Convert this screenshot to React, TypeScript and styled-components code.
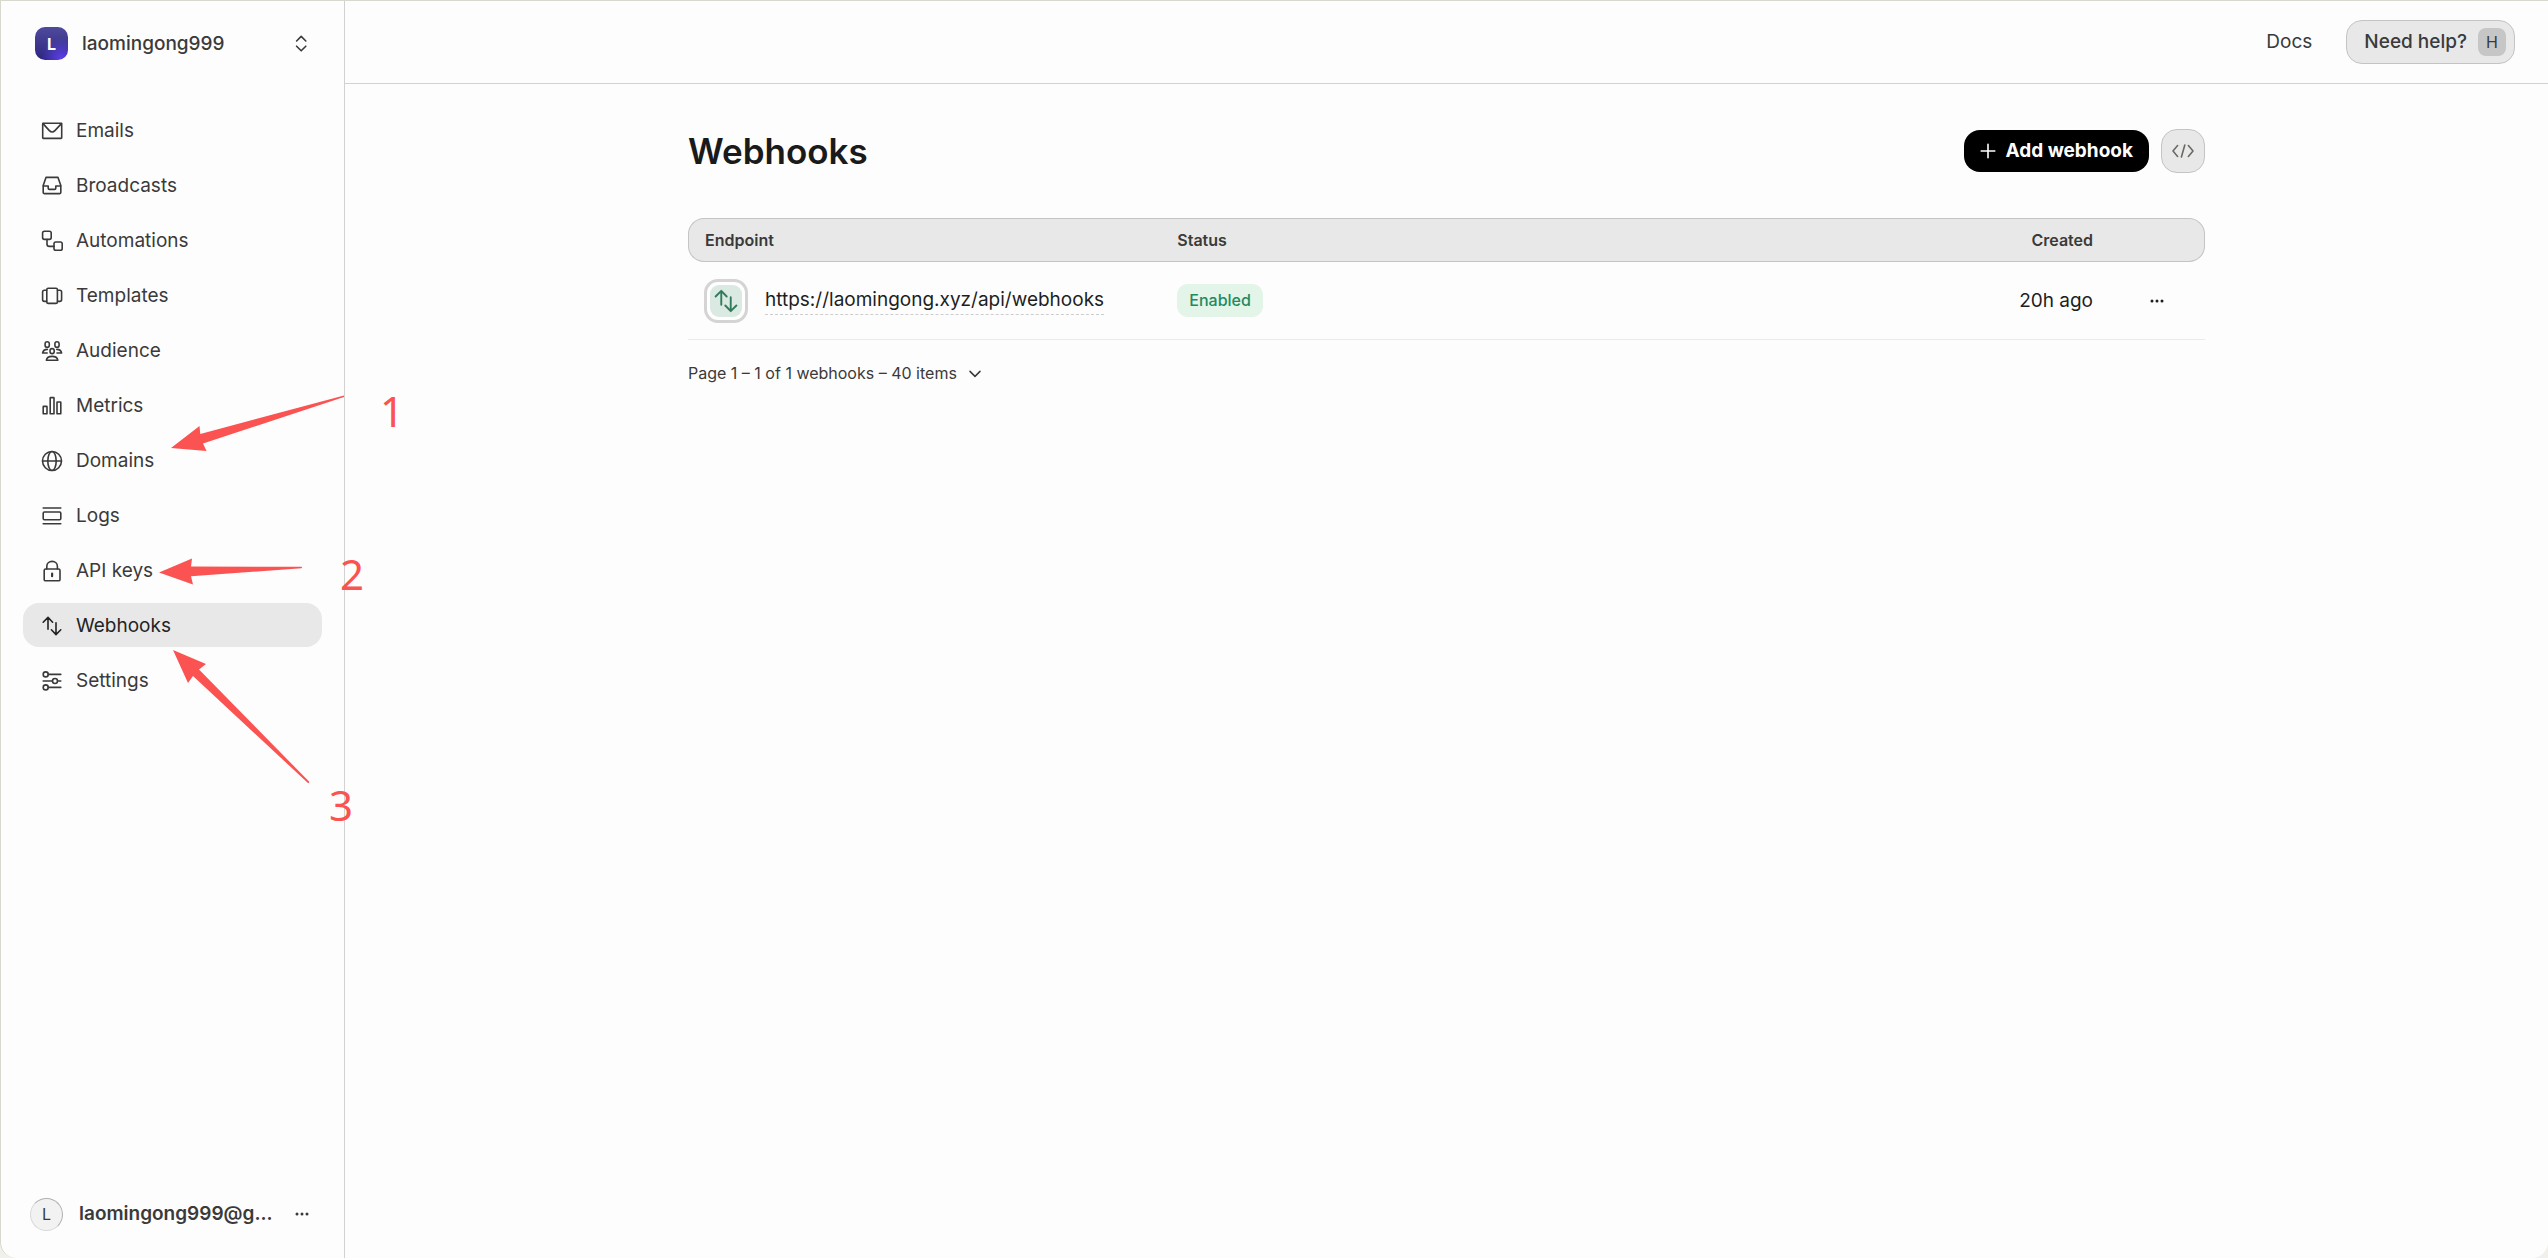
import React from "react";
import styled, { createGlobalStyle } from "styled-components";

const GlobalStyle = createGlobalStyle`
  *, *::before, *::after { box-sizing: border-box; }
  body {
    margin: 0;
    background: #f1f0ea;
    font-family: Inter, "Liberation Sans", sans-serif;
    color: #3a3a3a;
  }
  button, a { font: inherit; color: inherit; }
  button { border: 0; background: none; padding: 0; cursor: pointer; }
  a { text-decoration: none; }
  svg { display: block; flex: none; }
`;

const Frame = styled.div`
  position: relative;
  display: flex;
  min-height: 100vh;
  border: 1px solid #d8d8ce;
  border-bottom: 0;
  border-right: 0;
  border-radius: 0 0 16px 16px;
  background: #fdfdfd;
`;

const Sidebar = styled.aside`
  display: flex;
  flex-direction: column;
  flex: none;
  width: 344px;
  border-right: 1px solid #d2d2d2;
`;

const TeamSwitcher = styled.button`
  display: flex;
  align-items: center;
  gap: 14px;
  height: 85px;
  padding: 0 32px 0 34px;
  font-size: 19px;
  font-weight: 500;
  line-height: 28px;
`;

const TeamAvatar = styled.span`
  display: grid;
  place-items: center;
  width: 33px;
  height: 33px;
  border-radius: 10px;
  background:
    radial-gradient(circle at 80% 95%, #5b3fe6 0, rgba(91, 63, 230, 0) 50%),
    linear-gradient(#4f4a9c, #2c2680);
  color: #fff;
  font-size: 16px;
  font-weight: 700;
`;

const Grow = styled.span`
  flex: 1;
  min-width: 0;
  overflow: hidden;
  text-align: left;
  text-overflow: ellipsis;
  white-space: nowrap;
`;

const Nav = styled.nav`
  display: flex;
  flex-direction: column;
  flex: 1;
  gap: 11px;
  padding: 22px;
`;

const NavLink = styled.a<{ $active?: boolean }>`
  display: flex;
  align-items: center;
  gap: 13px;
  height: 44px;
  padding: 2px 18px 0;
  border-radius: 16px;
  background: ${(p) => (p.$active ? "#e8e8e8" : "transparent")};
  color: ${(p) => (p.$active ? "#242424" : "#3a3a3a")};
  font-size: 19px;
  line-height: 28px;
`;

const UserRow = styled.div`
  display: flex;
  align-items: center;
  gap: 16px;
  height: 88px;
  padding: 0 35px 0 29px;
  font-size: 19px;
  font-weight: 600;
  line-height: 28px;
`;

const UserAvatar = styled.span`
  display: grid;
  place-items: center;
  width: 33px;
  height: 33px;
  border: 1px solid #d9d9d9;
  border-top-color: #b0b0b0;
  border-right-color: #b0b0b0;
  border-radius: 50%;
  background: #f2f2f2;
  font-size: 16px;
  font-weight: 400;
`;

const Main = styled.div`
  flex: 1;
  min-width: 0;
`;

const TopBar = styled.header`
  display: flex;
  align-items: center;
  justify-content: flex-end;
  gap: 34px;
  height: 83px;
  padding: 0 33px;
  border-bottom: 1px solid #d2d2d2;
  font-size: 19px;
  line-height: 28px;
`;

const HelpButton = styled.button`
  display: flex;
  align-items: center;
  gap: 11px;
  height: 44px;
  padding: 0 8px 0 17px;
  border: 1px solid #c4c4c4;
  border-radius: 16px;
  background: #e8e8e8;
  font-weight: 500;
`;

const Key = styled.kbd`
  display: grid;
  place-items: center;
  width: 28px;
  height: 28px;
  border-radius: 8px;
  background: #c6c6c6;
  font-family: inherit;
  font-size: 16px;
  font-weight: 400;
`;

const Content = styled.main`
  max-width: 1517px;
  margin: 0 auto;
  padding-top: 45px;
`;

const TitleRow = styled.div`
  display: flex;
  align-items: center;
  gap: 12px;
  height: 44px;
`;

const Title = styled.h1`
  flex: 1;
  margin: 0;
  color: #1a1a1a;
  font-size: 35px;
  font-weight: 600;
  line-height: 44px;
`;

const AddButton = styled.button`
  display: flex;
  align-items: center;
  gap: 9px;
  height: 42px;
  padding: 0 16px;
  border-radius: 16px;
  background: #000;
  color: #fff;
  font-size: 19px;
  font-weight: 700;
  line-height: 28px;
`;

const CodeButton = styled.button`
  display: grid;
  place-items: center;
  width: 44px;
  height: 44px;
  border: 1px solid #c4c4c4;
  border-radius: 16px;
  background: #e8e8e8;
  color: #6a6a64;
`;

const Table = styled.table`
  width: 100%;
  margin-top: 45px;
  border-collapse: separate;
  border-spacing: 0;
  table-layout: fixed;
`;

const HeadCell = styled.th<{ $width?: string; $end?: boolean }>`
  width: ${(p) => p.$width ?? "auto"};
  height: 44px;
  padding: 0 16px;
  border: solid #c4c4c4;
  border-width: 1px 0;
  background: #e8e8e8;
  font-size: 16px;
  font-weight: 600;
  line-height: 22px;
  text-align: ${(p) => (p.$end ? "right" : "left")};

  &:first-child {
    border-left-width: 1px;
    border-radius: 16px 0 0 16px;
  }
  &:last-child {
    border-right-width: 1px;
    border-radius: 0 16px 16px 0;
  }
`;

const Cell = styled.td<{ $align?: "right" | "center" }>`
  height: 78px;
  padding: 0 16px;
  border-bottom: 1px solid #ebebeb;
  color: #1e1e1e;
  font-size: 19px;
  line-height: 28px;
  text-align: ${(p) => p.$align ?? "left"};
`;

const Endpoint = styled.div`
  display: flex;
  align-items: center;
  gap: 17px;
`;

const Tile = styled.span`
  display: grid;
  place-items: center;
  flex: none;
  width: 44px;
  height: 44px;
  border: 3px solid #d4d4d4;
  border-radius: 14px;
  background: #fff;
`;

const TileFace = styled.span`
  display: grid;
  place-items: center;
  width: 32px;
  height: 32px;
  border-radius: 9px;
  background: #daeae2;
  color: #327a5a;
`;

const EndpointLink = styled.a`
  border-bottom: 1px dashed #cdcdcd;
`;

const Badge = styled.span`
  display: inline-block;
  padding: 0 12px;
  border-radius: 11px;
  background: #e3f4e9;
  color: #218a5f;
  font-size: 16px;
  font-weight: 500;
  line-height: 33px;
  vertical-align: middle;
`;

const MoreButton = styled.button`
  display: inline-grid;
  place-items: center;
  height: 28px;
  vertical-align: middle;
`;

const Pager = styled.button`
  display: flex;
  align-items: center;
  gap: 10px;
  margin-top: 22px;
  font-size: 16px;
  line-height: 22px;
`;

const Annotations = styled.svg`
  position: absolute;
  top: -1px;
  left: -1px;
  pointer-events: none;
  fill: #fb5252;
`;

const Mark = styled.span<{ $x: number; $y: number }>`
  position: absolute;
  left: ${(p) => p.$x}px;
  top: ${(p) => p.$y}px;
  color: #fb5252;
  font-family: "Noto Sans", "Open Sans", sans-serif;
  font-size: 42px;
  line-height: 48px;
`;

const Icon = ({ children, size = 22 }: { children: React.ReactNode; size?: number }) => (
  <svg
    width={size}
    height={size}
    viewBox="0 0 22 22"
    fill="none"
    stroke="currentColor"
    strokeWidth="1.6"
    strokeLinecap="round"
    strokeLinejoin="round"
    aria-hidden="true"
  >
    {children}
  </svg>
);

const Arrows = () => (
  <>
    <path d="M2.2 7.2 7 2.4l4.6 4.800M7 2.6v11.6" />
    <path d="M10.4 14.8 15 19.6l4.8-4.8M15 19.4V7.8" />
  </>
);

const Dots = () => (
  <svg width="14" height="4" viewBox="0 0 14 4" fill="currentColor" aria-hidden="true">
    <circle cx="2" cy="2" r="1.5" />
    <circle cx="7" cy="2" r="1.5" />
    <circle cx="12" cy="2" r="1.5" />
  </svg>
);

const navItems: { label: string; icon: React.ReactNode; active?: boolean }[] = [
  {
    label: "Emails",
    icon: (
      <>
        <rect x="1.7" y="3.2" width="19" height="15.2" rx="0.6" />
        <path d="m2 3.6 6.4 7c1.7 1.8 3.8 1.8 5.5 0l6.5-7" />
      </>
    ),
  },
  {
    label: "Broadcasts",
    icon: (
      <>
        <path d="M2.2 10.6 5 2.400h12l2.8 8.200v7q0 1-1 1H3.200q-1 0-1-1z" />
        <path d="M2.4 11h4.8v2.2q0 1.200 1.200 1.200h5.200q1.200 0 1.200-1.200V11h4.800" />
      </>
    ),
  },
  {
    label: "Automations",
    icon: (
      <>
        <rect x="1.6" y="1.2" width="8.6" height="8.2" rx="1.8" />
        <rect x="13" y="12" width="8.2" height="8.2" rx="1.8" />
        <path d="M6 9.600V14q0 2.400 2.400 2.400H13" />
      </>
    ),
  },
  {
    label: "Templates",
    icon: (
      <>
        <rect x="5.8" y="3.2" width="10.6" height="15.2" rx="1.4" />
        <path d="M5.600 5.200H3.400q-1.800 0-1.800 1.800v7.600q0 1.800 1.800 1.800h2.200M16.600 5.200h2.200q1.800 0 1.800 1.800v7.600q0 1.800-1.800 1.800h-2.200" />
      </>
    ),
  },
  {
    label: "Audience",
    icon: (
      <>
        <rect x="4.1" y="1.7" width="4.2" height="5.6" rx="2.1" />
        <rect x="13.900" y="1.7" width="4.2" height="5.6" rx="2.1" />
        <rect x="9" y="8.6" width="4.2" height="5" rx="2.1" />
        <path d="M6.400 9.400c-2.600 0-4.400 1.400-4.800 3.600h4.600M15.800 9.400c2.600 0 4.400 1.400 4.800 3.600H16" />
        <path d="M5.400 20.200c.4-2.400 2.600-3.800 5.700-3.800s5.300 1.400 5.700 3.800z" />
      </>
    ),
  },
  {
    label: "Metrics",
    icon: (
      <>
        <rect x="2.2" y="11.4" width="3.8" height="7.4" rx="0.4" />
        <rect x="9.2" y="2.6" width="3.8" height="16.2" rx="0.4" />
        <rect x="16" y="7" width="3.8" height="11.8" rx="0.4" />
      </>
    ),
  },
  {
    label: "Domains",
    icon: (
      <>
        <circle cx="11" cy="11" r="9.5" />
        <ellipse cx="11" cy="11" rx="4.2" ry="9.5" />
        <path d="M1.600 11h18.800" />
      </>
    ),
  },
  {
    label: "Logs",
    icon: (
      <>
        <path d="M2.200 3h17.600M2.200 18.800h17.600" />
        <rect x="2.2" y="7" width="17.6" height="7.8" rx="1.2" />
      </>
    ),
  },
  {
    label: "API keys",
    icon: (
      <>
        <rect x="3.2" y="9" width="15.8" height="11.8" rx="1.4" />
        <path d="M5.800 9V6.400C5.800 3.400 8 1.400 11.100 1.400s5.300 2 5.300 5V9" />
        <path d="M11.100 13.600v2.600" strokeWidth="2.2" />
      </>
    ),
  },
  { label: "Webhooks", active: true, icon: <Arrows /> },
  {
    label: "Settings",
    icon: (
      <>
        <circle cx="4.7" cy="4.4" r="2.5" />
        <circle cx="14" cy="11" r="2.5" />
        <circle cx="4.7" cy="17.4" r="2.5" />
        <path d="M7.400 4.400h12.400M2.200 11h9.200M16.700 11h3.100M7.400 17.400h12.400" />
      </>
    ),
  },
];

export default function App() {
  return (
    <>
      <GlobalStyle />
      <Frame>
        <Sidebar>
          <TeamSwitcher>
            <TeamAvatar>L</TeamAvatar>
            <Grow>laomingong999</Grow>
            <Icon>
              <path d="m6.600 8 4.600-4.600L15.800 8M6.600 13.200l4.600 4.600 4.600-4.600" />
            </Icon>
          </TeamSwitcher>
          <Nav aria-label="Main">
            {navItems.map((item) => (
              <NavLink
                key={item.label}
                href="#"
                $active={item.active}
                aria-current={item.active ? "page" : undefined}
              >
                <Icon>{item.icon}</Icon>
                {item.label}
              </NavLink>
            ))}
          </Nav>
          <UserRow>
            <UserAvatar>L</UserAvatar>
            <Grow>laomingong999@g...</Grow>
            <MoreButton aria-label="Account menu">
              <Dots />
            </MoreButton>
          </UserRow>
        </Sidebar>

        <Main>
          <TopBar>
            <a href="#">Docs</a>
            <HelpButton>
              Need help? <Key>H</Key>
            </HelpButton>
          </TopBar>
          <Content>
            <TitleRow>
              <Title>Webhooks</Title>
              <AddButton>
                <svg width="16" height="16" viewBox="0 0 16 16" stroke="currentColor" strokeWidth="1.6" strokeLinecap="round" aria-hidden="true">
                  <path d="M8 1.200v13.600M1.200 8h13.600" />
                </svg>
                Add webhook
              </AddButton>
              <CodeButton aria-label="View code">
                <Icon>
                  <path d="M5.600 5.600 1 11l4.600 5.400M16.400 5.600 21 11l-4.600 5.400M12.800 5 9.400 17" />
                </Icon>
              </CodeButton>
            </TitleRow>
            <Table>
              <thead>
                <tr>
                  <HeadCell scope="col" $width="31.2%">Endpoint</HeadCell>
                  <HeadCell scope="col">Status</HeadCell>
                  <HeadCell scope="col" $end>Created</HeadCell>
                  <HeadCell scope="col" $width="96px" aria-label="Actions" />
                </tr>
              </thead>
              <tbody>
                <tr>
                  <Cell>
                    <Endpoint>
                      <Tile>
                        <TileFace>
                          <Icon size={26}>
                            <Arrows />
                          </Icon>
                        </TileFace>
                      </Tile>
                      <EndpointLink href="#">https://laomingong.xyz/api/webhooks</EndpointLink>
                    </Endpoint>
                  </Cell>
                  <Cell>
                    <Badge>Enabled</Badge>
                  </Cell>
                  <Cell $align="right">20h ago</Cell>
                  <Cell $align="center">
                    <MoreButton aria-label="More actions">
                      <Dots />
                    </MoreButton>
                  </Cell>
                </tr>
              </tbody>
            </Table>
            <Pager>
              Page 1 – 1 of 1 webhooks – 40 items
              <svg width="16" height="16" viewBox="0 0 16 16" fill="none" stroke="currentColor" strokeWidth="1.5" strokeLinecap="round" strokeLinejoin="round" aria-hidden="true">
                <path d="m3 6.400 5 5 5-5" />
              </svg>
            </Pager>
          </Content>
        </Main>

        <Annotations width="360" height="800" viewBox="0 0 360 800" aria-hidden="true">
          <path d="M171 448 199.500 426l.8 8L344 395.400v1.500L203 443.500l3.500 7.500z" />
          <path d="M159 572.500 192 558.500l-1 8 110.500.3q1 .7 0 1.400L191 576.200l2 8.300z" />
          <path d="M173 650l33 14-7 5.500L309.500 782l-1.300 1.300L193 676l-5 7z" />
        </Annotations>
        <Mark $x={379} $y={386}>1</Mark>
        <Mark $x={339} $y={549}>2</Mark>
        <Mark $x={328} $y={780}>3</Mark>
      </Frame>
    </>
  );
}
